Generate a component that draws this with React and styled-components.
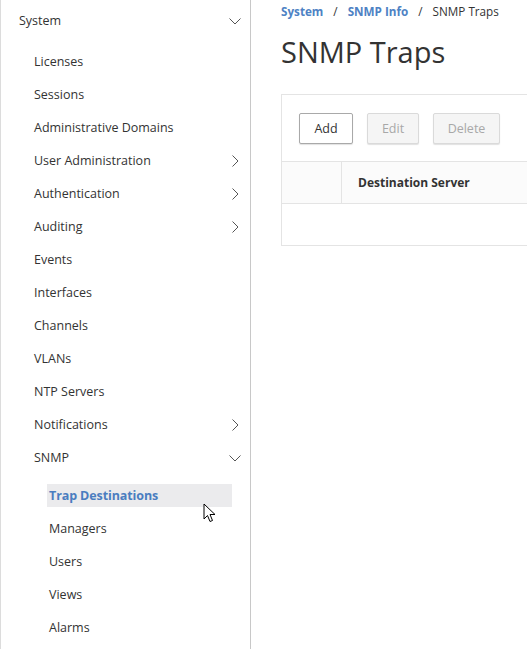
import React from 'react';
import styled, { createGlobalStyle } from 'styled-components';

const GlobalStyle = createGlobalStyle`
  html, body {
    margin: 0;
    padding: 0;
    background: #fff;
    overflow: hidden;
  }
  body {
    font-family: "Open Sans", "Noto Sans", sans-serif;
    color: #333;
  }
`

const Page = styled.div`
  display: flex;
  height: 649px;
  position: relative;
`

const Sidebar = styled.nav`
  flex: none;
  width: 251px;
  box-sizing: border-box;
  border-left: 1px solid #dcdcdc;
  border-right: 1px solid #c8c8c8;
  padding-top: 4px;
`

const Row = styled.div`
  display: flex;
  align-items: center;
  justify-content: space-between;
  height: 33px;
  padding-left: ${p => p.indent}px;
  padding-right: 9px;
  font-size: 12.5px;
  color: #333;
`

const SubList = styled.div`
  padding-top: ${p => p.top}px;
`

const Leaves = styled.div`
  display: flex;
  flex-direction: column;
  gap: 10px;
  padding-top: 10px;
`

const Leaf = styled.div`
  height: 23px;
  display: flex;
  align-items: center;
  margin-left: 46px;
  width: 183px;
  padding-left: 2px;
  font-size: 12.5px;
  color: ${p => (p.active ? '#4a7dc0' : '#333')};
  font-weight: ${p => (p.active ? 700 : 400)};
  letter-spacing: ${p => (p.active ? '-0.1px' : '0')};
  background: ${p => (p.active ? '#ebebed' : 'transparent')};
`

const Main = styled.main`
  flex: 1;
  overflow: hidden;
  padding-left: 30px;
`

const Crumbs = styled.div`
  display: flex;
  gap: 10px;
  font-size: 11.7px;
  height: 21px;
  align-items: center;
  white-space: nowrap;
`

const Crumb = styled.span`
  color: ${p => (p.link ? '#4e82c4' : '#333')};
  font-weight: ${p => (p.link ? 700 : 400)};
`

const Title = styled.h1`
  margin: 12px 0 0;
  font-size: 29px;
  font-weight: 400;
  color: #333;
  line-height: 38px;
  white-space: nowrap;
`

const Panel = styled.section`
  margin-top: 23px;
  width: 420px;
  border: 1px solid #e4e4e4;
  border-right: none;
`

const Toolbar = styled.div`
  display: flex;
  gap: 14px;
  padding: 18px 17px 17px;
`

const Button = styled.button`
  height: 31px;
  width: ${p => p.w}px;
  font-family: inherit;
  font-size: 12.5px;
  border-radius: 2px;
  border: 1px solid ${p => (p.disabled ? '#dadada' : '#a9a9a9')};
  background: ${p => (p.disabled ? '#f5f5f5' : '#fff')};
  color: ${p => (p.disabled ? '#a8a8a8' : '#333')};
  box-shadow: 0 1px 1px rgba(0, 0, 0, 0.12);
  padding: 0;
`

const HeadRow = styled.div`
  display: flex;
  height: 41px;
  border-top: 1px solid #e4e4e4;
  border-bottom: 1px solid #e4e4e4;
  background: #fbfbfb;
`

const CheckCell = styled.div`
  width: 59px;
  border-right: 1px solid #e4e4e4;
`

const HeadCell = styled.div`
  display: flex;
  align-items: center;
  padding-left: 16px;
  font-size: 12px;
  font-weight: 700;
  color: #333;
`

const BodyRow = styled.div`
  height: 41px;
`

const Cursor = styled.svg`
  position: absolute;
  left: 203px;
  top: 503px;
`

const Chevron = ({ dir }) => (
  <svg width="12" height="12" viewBox="0 0 12 12">
    {dir === 'down'
      ? <path d="M0.5 3.5 L6 9 L11.5 3.5" fill="none" stroke="#555" strokeWidth="1" />
      : <path d="M3.5 0.5 L9 6 L3.5 11.5" fill="none" stroke="#555" strokeWidth="1" />}
  </svg>
)

const items = [
  ['Licenses'],
  ['Sessions'],
  ['Administrative Domains'],
  ['User Administration', 'right'],
  ['Authentication', 'right'],
  ['Auditing', 'right'],
  ['Events'],
  ['Interfaces'],
  ['Channels'],
  ['VLANs'],
  ['NTP Servers'],
  ['Notifications', 'right'],
]

const snmp = ['Trap Destinations', 'Managers', 'Users', 'Views', 'Alarms']

const App = () => {
  return (
    <>
      <GlobalStyle />
      <Page>
        <Sidebar>
          <Row indent={18}>
            <span>System</span>
            <Chevron dir="down" />
          </Row>
          <SubList top={8}>
            {items.map(([label, chev]) => (
              <Row indent={33} key={label}>
                <span>{label}</span>
                {chev && <Chevron dir={chev} />}
              </Row>
            ))}
            <Row indent={33}>
              <span>SNMP</span>
              <Chevron dir="down" />
            </Row>
            <Leaves>
              {snmp.map((s, i) => (
                <Leaf key={s} active={i === 0}>{s}</Leaf>
              ))}
            </Leaves>
          </SubList>
        </Sidebar>
        <Main>
          <Crumbs>
            <Crumb link>System</Crumb>
            <Crumb>/</Crumb>
            <Crumb link>SNMP Info</Crumb>
            <Crumb>/</Crumb>
            <Crumb>SNMP Traps</Crumb>
          </Crumbs>
          <Title>SNMP Traps</Title>
          <Panel>
            <Toolbar>
              <Button w={54}>Add</Button>
              <Button w={52} disabled>Edit</Button>
              <Button w={67} disabled>Delete</Button>
            </Toolbar>
            <HeadRow>
              <CheckCell />
              <HeadCell>Destination Server</HeadCell>
            </HeadRow>
            <BodyRow />
          </Panel>
        </Main>
        <Cursor width="14" height="22" viewBox="0 0 14 22">
          <path d="M1 1 L1 16 L4.5 12.5 L7 18.5 L9.5 17.5 L7 11.5 L12 11.5 Z" fill="#fff" stroke="#000" strokeWidth="1" strokeLinejoin="miter" />
        </Cursor>
      </Page>
    </>
  )
}

export default App
